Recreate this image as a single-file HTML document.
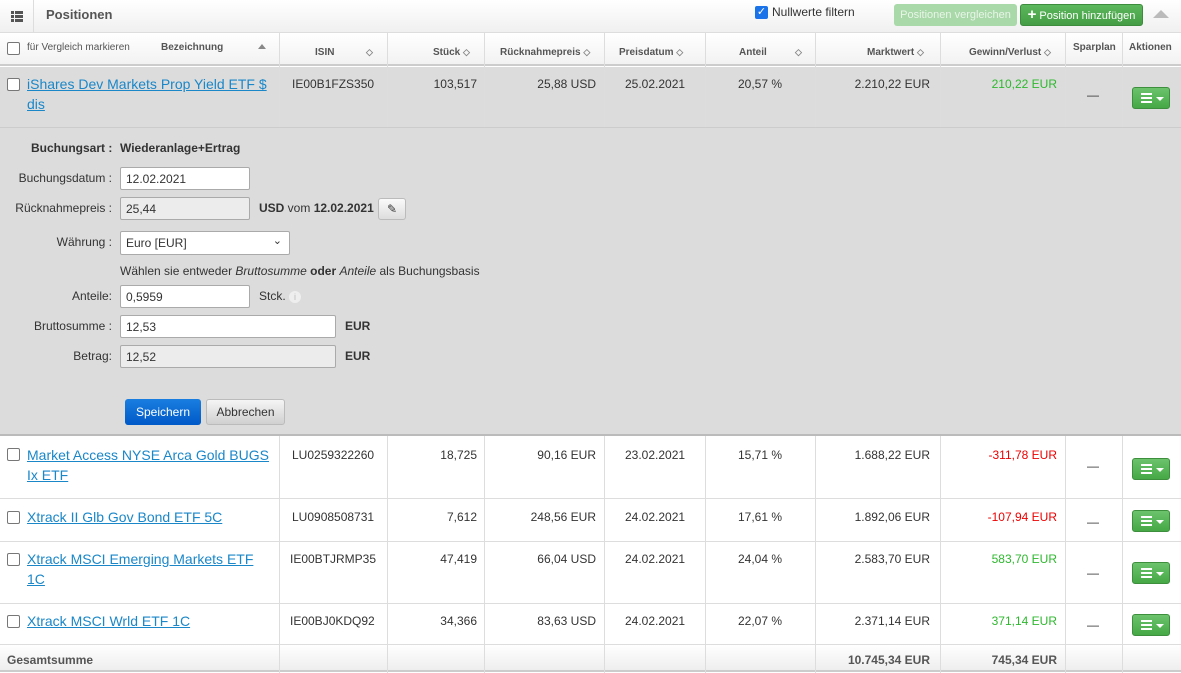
<!DOCTYPE html><html><head><style>
*{box-sizing:border-box;margin:0;padding:0}
body{width:1181px;height:673px;background:#fff;font-family:"Liberation Sans",Arial,sans-serif;font-size:12px;color:#333;position:relative;overflow:hidden}
.a{position:absolute}
.top{left:0;top:0;width:1181px;height:33px;background:linear-gradient(#fff,#f0f0f0);border-bottom:1px solid #ddd}
.hdr{left:0;top:33px;width:1181px;height:33px;background:linear-gradient(#fff,#f2f2f2);border-bottom:2px solid #ccc}
.vl{position:absolute;width:1px;background:#ddd}
.th{position:absolute;font-size:10px;font-weight:bold;color:#555;top:47px}
.cb{position:absolute;width:13px;height:13px;border:1px solid #777;border-radius:2px;background:#fff}
.lnk{position:absolute;color:#1a87c9;text-decoration:underline;font-size:14px;line-height:20px}
.t{position:absolute;font-size:12px;color:#333}
.r{text-align:right}
.act{position:absolute;width:38px;height:22px;background:linear-gradient(#6cc36c,#45a845);border:1px solid #3d8f3d;border-radius:3px}
.inp{position:absolute;height:23px;border:1px solid #aaa;border-radius:2px;background:#fff;font-size:12px;padding:4px 5px;color:#333}
.ro{background:#ececec}
.lbl{position:absolute;font-size:12px;text-align:right;color:#333}
.hl{position:absolute;left:0;width:1181px;height:1px;background:#ddd}
.arr{font-size:9px;color:#888}
</style></head><body>
<div class="a top"></div>
<div class="vl" style="left:33px;top:0;height:33px"></div>
<div class="a" style="left:11px;top:11px;width:12px;height:11px">
<div class="a" style="left:0;top:0;width:3px;height:3px;background:#555"></div><div class="a" style="left:4px;top:0;width:8px;height:3px;background:#555"></div>
<div class="a" style="left:0;top:4px;width:3px;height:3px;background:#555"></div><div class="a" style="left:4px;top:4px;width:8px;height:3px;background:#555"></div>
<div class="a" style="left:0;top:8px;width:3px;height:3px;background:#555"></div><div class="a" style="left:4px;top:8px;width:8px;height:3px;background:#555"></div></div>
<div class="t" style="left:46px;top:7px;font-size:13px;font-weight:bold;color:#555">Positionen</div>
<div class="a" style="left:755px;top:6px;width:13px;height:13px;background:#1a73e8;border-radius:2px;color:#fff;font-size:11px;line-height:13px;text-align:center">✓</div>
<div class="t" style="left:772px;top:5px">Nullwerte filtern</div>
<div class="a" style="left:894px;top:4px;width:123px;height:22px;background:#a9d8a9;border-radius:3px;color:#e8f5e8;font-size:11px;line-height:22px;text-align:center">Positionen vergleichen</div>
<div class="a" style="left:1020px;top:4px;width:123px;height:22px;background:linear-gradient(#5cb85c,#449d44);border:1px solid #3d8b3d;border-radius:3px;color:#fff;font-size:11px;line-height:20px;text-align:center"><b style="font-size:15px">+</b> Position hinzufügen</div>
<div class="a" style="left:1153px;top:10px;width:0;height:0;border-left:8px solid transparent;border-right:8px solid transparent;border-bottom:8px solid #bbb"></div>

<div class="a hdr"></div>
<div class="vl" style="left:279px;top:33px;height:94px"></div><div class="vl" style="left:279px;top:435px;height:238px"></div>
<div class="vl" style="left:387px;top:33px;height:94px"></div><div class="vl" style="left:387px;top:435px;height:238px"></div>
<div class="vl" style="left:484px;top:33px;height:94px"></div><div class="vl" style="left:484px;top:435px;height:238px"></div>
<div class="vl" style="left:604px;top:33px;height:94px"></div><div class="vl" style="left:604px;top:435px;height:238px"></div>
<div class="vl" style="left:705px;top:33px;height:94px"></div><div class="vl" style="left:705px;top:435px;height:238px"></div>
<div class="vl" style="left:815px;top:33px;height:94px"></div><div class="vl" style="left:815px;top:435px;height:238px"></div>
<div class="vl" style="left:940px;top:33px;height:94px"></div><div class="vl" style="left:940px;top:435px;height:238px"></div>
<div class="vl" style="left:1065px;top:33px;height:94px"></div><div class="vl" style="left:1065px;top:435px;height:238px"></div>
<div class="vl" style="left:1122px;top:33px;height:94px"></div><div class="vl" style="left:1122px;top:435px;height:238px"></div>

<div class="cb" style="left:7px;top:42px"></div>
<div class="t" style="left:27px;top:42px;font-size:10px;color:#555">für Vergleich markieren</div>
<div class="th" style="left:161px;top:42px">Bezeichnung</div>
<div class="a" style="left:258px;top:44px;width:0;height:0;border-left:4px solid transparent;border-right:4px solid transparent;border-bottom:5px solid #888"></div>
<div class="th" style="left:315px">ISIN</div><div class="th arr" style="left:366px">◇</div>
<div class="th" style="left:433px">Stück <span class="arr">◇</span></div>
<div class="th" style="left:500px">Rücknahmepreis <span class="arr">◇</span></div>
<div class="th" style="left:619px">Preisdatum <span class="arr">◇</span></div>
<div class="th" style="left:739px">Anteil</div><div class="th arr" style="left:795px">◇</div>
<div class="th" style="left:867px">Marktwert <span class="arr">◇</span></div>
<div class="th" style="left:969px">Gewinn/Verlust <span class="arr">◇</span></div>
<div class="th" style="left:1073px;top:42px">Sparplan</div>
<div class="th" style="left:1129px;top:42px">Aktionen</div>

<div class="a" style="left:0;top:67px;width:1181px;height:368px;background:#dcdcdc"></div>
<div class="hl" style="top:127px;background:#ccc"></div>
<div class="hl" style="top:434px;background:#bbb;height:2px"></div>
<div class="vl" style="left:279px;top:66px;height:61px"></div>
<div class="vl" style="left:387px;top:66px;height:61px"></div><div class="vl" style="left:484px;top:66px;height:61px"></div><div class="vl" style="left:604px;top:66px;height:61px"></div><div class="vl" style="left:705px;top:66px;height:61px"></div><div class="vl" style="left:815px;top:66px;height:61px"></div><div class="vl" style="left:940px;top:66px;height:61px"></div><div class="vl" style="left:1065px;top:66px;height:61px"></div><div class="vl" style="left:1122px;top:66px;height:61px"></div>

<div class="cb" style="left:7px;top:78px"></div>
<div class="lnk" style="left:27px;top:74px;width:250px">iShares Dev Markets Prop Yield ETF $ dis</div>
<div class="t" style="left:292px;top:77px">IE00B1FZS350</div>
<div class="t r" style="left:387px;top:77px;width:90px">103,517</div>
<div class="t r" style="left:484px;top:77px;width:112px">25,88 USD</div>
<div class="t" style="left:625px;top:77px">25.02.2021</div>
<div class="t" style="left:738px;top:77px">20,57 %</div>
<div class="t r" style="left:815px;top:77px;width:115px">2.210,22 EUR</div>
<div class="t r" style="left:940px;top:77px;width:117px;color:#2eb82e">210,22 EUR</div>
<div class="t" style="left:1087px;top:88px">—</div>
<div class="act" style="left:1132px;top:87px"></div>

<div class="t" style="left:31px;top:141px;font-weight:bold">Buchungsart :</div>
<div class="t" style="left:120px;top:141px;font-weight:bold">Wiederanlage+Ertrag</div>
<div class="lbl" style="left:0;top:171px;width:112px">Buchungsdatum :</div>
<div class="inp" style="left:120px;top:167px;width:130px">12.02.2021</div>
<div class="lbl" style="left:0;top:201px;width:112px">Rücknahmepreis :</div>
<div class="inp ro" style="left:120px;top:197px;width:130px">25,44</div>
<div class="t" style="left:259px;top:201px"><b>USD</b> vom <b>12.02.2021</b></div>
<div class="a" style="left:378px;top:198px;width:28px;height:22px;background:linear-gradient(#fafafa,#ddd);border:1px solid #bbb;border-radius:3px;text-align:center;line-height:20px;font-size:12px">✎</div>
<div class="lbl" style="left:0;top:235px;width:112px">Währung :</div>
<div class="inp" style="left:120px;top:231px;width:170px;height:24px">Euro [EUR]<span style="position:absolute;right:7px;top:2px;font-size:11px">⌄</span></div>
<div class="t" style="left:120px;top:264px">Wählen sie entweder <i>Bruttosumme</i> <b>oder</b> <i>Anteile</i> als Buchungsbasis</div>
<div class="lbl" style="left:0;top:289px;width:112px">Anteile:</div>
<div class="inp" style="left:120px;top:285px;width:130px">0,5959</div>
<div class="t" style="left:259px;top:289px">Stck.</div>
<div class="a" style="left:289px;top:291px;width:12px;height:12px;border-radius:6px;background:#eee;color:#bbb;font-size:9px;line-height:12px;text-align:center">i</div>
<div class="lbl" style="left:0;top:319px;width:112px">Bruttosumme :</div>
<div class="inp" style="left:120px;top:315px;width:216px">12,53</div>
<div class="t" style="left:345px;top:319px;font-weight:bold">EUR</div>
<div class="lbl" style="left:0;top:349px;width:112px">Betrag:</div>
<div class="inp ro" style="left:120px;top:345px;width:216px">12,52</div>
<div class="t" style="left:345px;top:349px;font-weight:bold">EUR</div>
<div class="a" style="left:125px;top:399px;width:76px;height:26px;background:linear-gradient(#1a7ee0,#0059c8);border-radius:3px;color:#fff;text-align:center;line-height:26px">Speichern</div>
<div class="a" style="left:206px;top:399px;width:79px;height:26px;background:linear-gradient(#f5f5f5,#d0d0d0);border:1px solid #bbb;border-radius:3px;text-align:center;line-height:24px">Abbrechen</div>

<div class="hl" style="top:498px"></div><div class="hl" style="top:541px"></div><div class="hl" style="top:603px"></div><div class="hl" style="top:644px"></div>
<div class="a" style="left:0;top:645px;width:1181px;height:27px;background:linear-gradient(#fff,#eee);border-bottom:2px solid #ccc"></div>
<div class="vl" style="left:279px;top:645px;height:27px"></div><div class="vl" style="left:387px;top:645px;height:27px"></div><div class="vl" style="left:484px;top:645px;height:27px"></div><div class="vl" style="left:604px;top:645px;height:27px"></div><div class="vl" style="left:705px;top:645px;height:27px"></div><div class="vl" style="left:815px;top:645px;height:27px"></div><div class="vl" style="left:940px;top:645px;height:27px"></div><div class="vl" style="left:1065px;top:645px;height:27px"></div><div class="vl" style="left:1122px;top:645px;height:27px"></div>

<div class="cb" style="left:7px;top:448px"></div>
<div class="lnk" style="left:27px;top:445px;width:250px">Market Access NYSE Arca Gold BUGS Ix ETF</div>
<div class="t" style="left:292px;top:448px">LU0259322260</div>
<div class="t r" style="left:387px;top:448px;width:90px">18,725</div>
<div class="t r" style="left:484px;top:448px;width:112px">90,16 EUR</div>
<div class="t" style="left:625px;top:448px">23.02.2021</div>
<div class="t" style="left:738px;top:448px">15,71 %</div>
<div class="t r" style="left:815px;top:448px;width:115px">1.688,22 EUR</div>
<div class="t r" style="left:940px;top:448px;width:117px;color:#e00">-311,78 EUR</div>
<div class="t" style="left:1087px;top:459px">—</div>
<div class="act" style="left:1132px;top:458px"></div>

<div class="cb" style="left:7px;top:511px"></div>
<div class="lnk" style="left:27px;top:507px">Xtrack II Glb Gov Bond ETF 5C</div>
<div class="t" style="left:292px;top:510px">LU0908508731</div>
<div class="t r" style="left:387px;top:510px;width:90px">7,612</div>
<div class="t r" style="left:484px;top:510px;width:112px">248,56 EUR</div>
<div class="t" style="left:625px;top:510px">24.02.2021</div>
<div class="t" style="left:738px;top:510px">17,61 %</div>
<div class="t r" style="left:815px;top:510px;width:115px">1.892,06 EUR</div>
<div class="t r" style="left:940px;top:510px;width:117px;color:#e00">-107,94 EUR</div>
<div class="t" style="left:1087px;top:515px">—</div>
<div class="act" style="left:1132px;top:510px"></div>

<div class="cb" style="left:7px;top:553px"></div>
<div class="lnk" style="left:27px;top:549px;width:235px">Xtrack MSCI Emerging Markets ETF 1C</div>
<div class="t" style="left:290px;top:552px">IE00BTJRMP35</div>
<div class="t r" style="left:387px;top:552px;width:90px">47,419</div>
<div class="t r" style="left:484px;top:552px;width:112px">66,04 USD</div>
<div class="t" style="left:625px;top:552px">24.02.2021</div>
<div class="t" style="left:738px;top:552px">24,04 %</div>
<div class="t r" style="left:815px;top:552px;width:115px">2.583,70 EUR</div>
<div class="t r" style="left:940px;top:552px;width:117px;color:#2eb82e">583,70 EUR</div>
<div class="t" style="left:1087px;top:566px">—</div>
<div class="act" style="left:1132px;top:562px"></div>

<div class="cb" style="left:7px;top:615px"></div>
<div class="lnk" style="left:27px;top:611px">Xtrack MSCI Wrld ETF 1C</div>
<div class="t" style="left:290px;top:614px">IE00BJ0KDQ92</div>
<div class="t r" style="left:387px;top:614px;width:90px">34,366</div>
<div class="t r" style="left:484px;top:614px;width:112px">83,63 USD</div>
<div class="t" style="left:625px;top:614px">24.02.2021</div>
<div class="t" style="left:738px;top:614px">22,07 %</div>
<div class="t r" style="left:815px;top:614px;width:115px">2.371,14 EUR</div>
<div class="t r" style="left:940px;top:614px;width:117px;color:#2eb82e">371,14 EUR</div>
<div class="t" style="left:1087px;top:618px">—</div>
<div class="act" style="left:1132px;top:614px"></div>

<div class="t" style="left:7px;top:653px;font-weight:bold;color:#555">Gesamtsumme</div>
<div class="t r" style="left:815px;top:653px;width:115px;font-weight:bold;color:#555">10.745,34 EUR</div>
<div class="t r" style="left:940px;top:653px;width:117px;font-weight:bold;color:#555">745,34 EUR</div>

<style>.act::before{content:"";position:absolute;left:8px;top:5px;width:11px;height:2px;background:#fff;box-shadow:0 4px 0 #fff,0 8px 0 #fff}.act::after{content:"";position:absolute;left:23px;top:9px;border-left:4px solid transparent;border-right:4px solid transparent;border-top:4px solid #fff}</style>
</body></html>
